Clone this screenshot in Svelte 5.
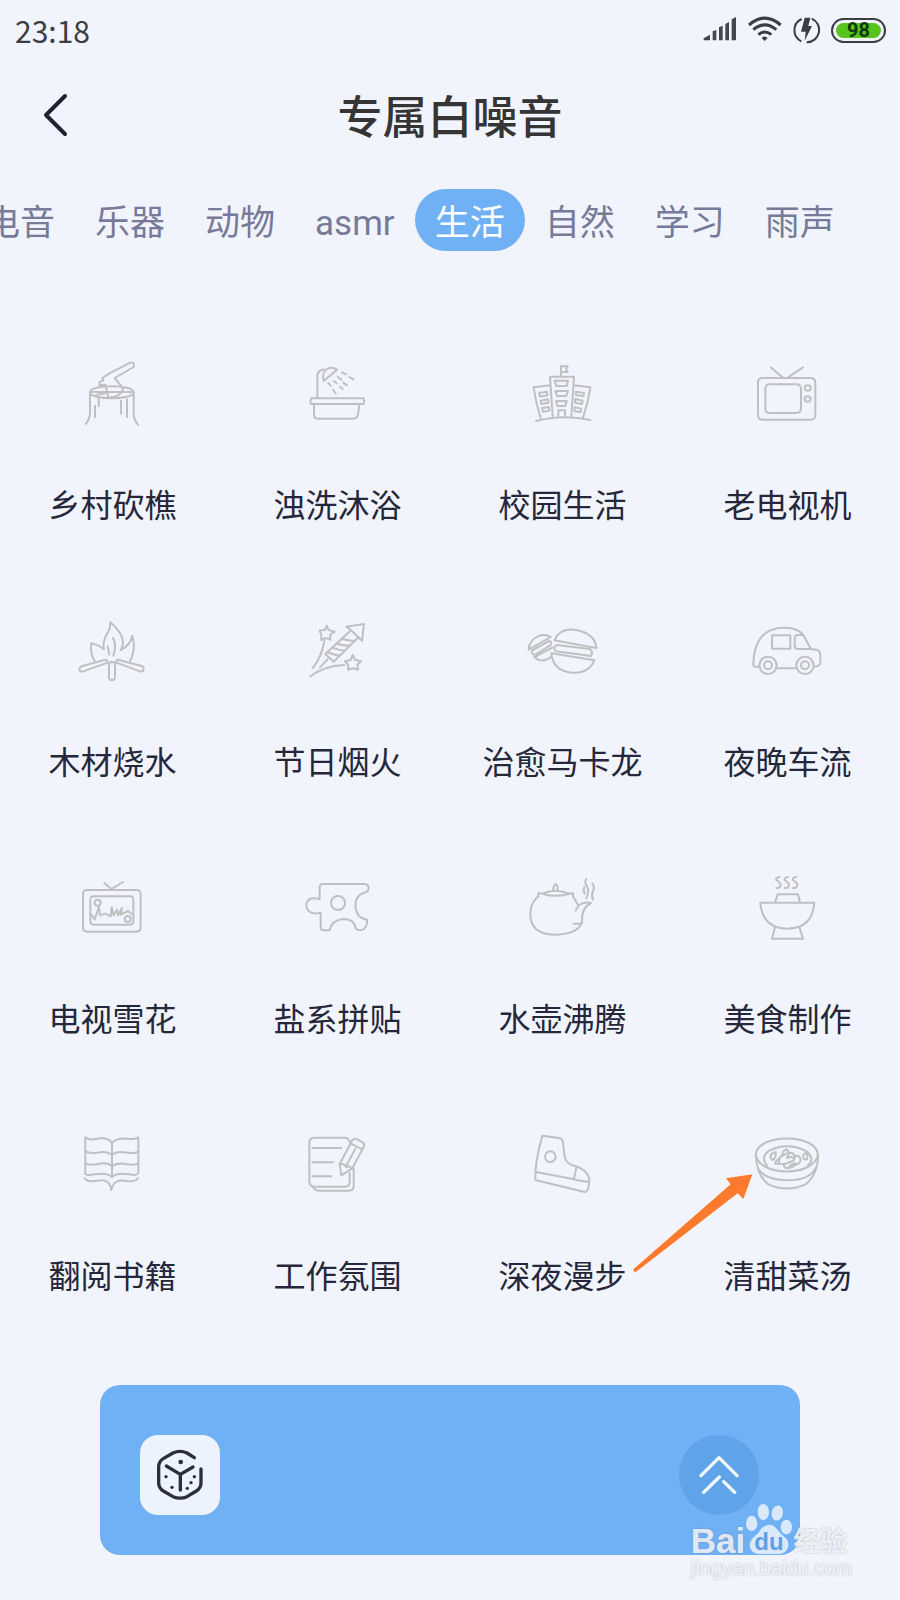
<script>
  const tabs = ['电音', '乐器', '动物', 'asmr', '生活', '自然', '学习', '雨声'];
  let activeTab = $state('生活');

  const sounds = [
    {
      name: '乡村砍樵',
      box: '31 24 252 252',
      paths: [
        'M91 142C91 118 222 118 222 142C222 166 91 166 91 142Z',
        'M91 142V205Q90 222 78 237M222 142V208Q223 225 235 239',
        'M106 182V217M117 158V184M184 168V206M202 163V216',
        'M97 141H217M108 151Q120 146 139 145',
        'M148 86L212 53Q224 50 223 63L222 66L165 99L191 131Q180 160 146 157L137 119L119 121L120 111L131 106L128 99Z',
      ],
    },
    {
      name: '浊洗沐浴',
      box: '706 24 252 252',
      paths: [
        'M773 158V92Q774 77 792 73',
        'M792 108Q785 82 802 72Q816 64 832 74Z',
        'M754 160H912Q915 168 912 177H754Q750 168 754 160Z',
        'M763 178V212Q764 221 776 221H882Q893 220 895 209L899 178',
        'M847 82L859 88M869 96L881 103M834 95L845 104M822 108L831 115M806 114L813 122M851 113L862 121M841 125L849 132M820 134L828 145',
      ],
    },
    {
      name: '校园生活',
      box: '31 24 252 252',
      paths: [
        'M79 228Q160 207 242 225',
        'M129 214L121 95H193L185 214M93 219Q78 172 72 127L121 121M220 218Q236 172 242 127L193 121',
        'M154 94V64H174L169 73L174 81H155',
        'M135 107H175L171 123H140ZM137 138H175L170 153H142ZM139 168H171L167 183H143ZM146 213V196H166V213',
        'M88 144L112 140L113 151L91 155ZM93 167L115 163L117 173L95 177ZM97 189L118 186L119 197L100 200Z',
        'M198 140L223 144L221 154L199 150ZM197 162L219 167L217 177L196 173ZM195 187L215 191L212 202L194 198Z',
      ],
    },
    {
      name: '老电视机',
      box: '706 24 252 252',
      paths: [
        'M759 99H903Q917 99 917 113V210Q917 224 903 224H759Q745 224 745 210V113Q745 99 759 99Z',
        'M780 118H860Q874 118 874 132V190Q874 204 860 204H780Q767 204 767 190V132Q767 118 780 118Z',
        'M783 67L820 98M880 67L834 98',
        'M885 129a9 8 0 1 0 18 0a9 8 0 1 0 -18 0M885 162a9 8 0 1 0 18 0a9 8 0 1 0 -18 0',
      ],
    },
    {
      name: '木材烧水',
      box: '31 15 252 252',
      paths: [
        'M132 132Q129 105 145 82Q153 68 152 52Q191 86 190 113Q190 124 184 135',
        'M132 132Q118 121 95 115Q90 145 105 168M184 135Q212 120 218 92Q230 134 211 168',
        'M144 124L149 149M160 99Q172 122 161 152',
        'M65 184L137 164Q145 166 144 173L69 200Q55 200 61 188ZM249 184L175 164Q168 167 170 173L243 200Q258 199 249 184Z',
        'M157 170Q167 171 166 180V216Q165 226 157 226Q148 226 148 216V180Q148 171 157 170Z',
      ],
    },
    {
      name: '节日烟火',
      box: '706 15 252 252',
      paths: [
        'M860 65L913 57L907 107L896 97L822 170L797 147L874 76Z',
        'M874 76L896 97M803 141Q820 150 840 152M817 128Q836 135 855 137M831 116Q852 122 869 122M846 102Q866 107 884 108',
        'M801 62L807 75L825 80L812 89L812 104L798 99L785 105L785 90L780 76L795 76Z',
        'M879 150L887 165L904 169L893 179L895 194L880 190L865 194L866 180L856 169L873 165Z',
        'M804 163L781 187M794 108Q786 157 759 189M854 180Q792 183 752 214',
      ],
    },
    {
      name: '治愈马卡龙',
      box: '31 15 252 252',
      paths: [
        'M134 106Q150 67 199 75Q257 86 260 129Z',
        'M141 120L241 132Q251 141 244 153L139 139Q128 129 141 120Z',
        'M125 145L254 166Q238 205 188 203Q130 198 125 145Z',
        'M57 134Q59 103 90 92Q107 86 123 96Z',
        'M69 135L118 108Q129 110 122 121L77 149Q62 149 69 135Z',
        'M74 156L129 127M74 156Q97 177 126 155',
      ],
    },
    {
      name: '夜晚车流',
      box: '706 15 252 252',
      paths: [
        'M748 185H736Q730 184 731 174Q735 68 824 68Q867 68 882 92L904 132L920 134Q932 137 932 150V174Q931 184 912 185M801 190H860',
        'M787 91H842V131H787ZM877 90H865Q855 90 855 102V122Q855 132 865 132H903',
        'M749 181a26 26 0 1 0 52 0a26 26 0 1 0 -52 0M860 181a26 26 0 1 0 52 0a26 26 0 1 0 -52 0',
        'M763 181a12 12 0 1 0 24 0a12 12 0 1 0 -24 0M874 181a12 12 0 1 0 24 0a12 12 0 1 0 -24 0',
      ],
    },
    {
      name: '电视雪花',
      box: '31 21 252 252',
      paths: [
        'M82 90H230Q243 90 243 103V202Q243 215 230 215H82Q70 215 70 202V103Q70 90 82 90Z',
        'M103 109H211Q221 109 221 119V184Q221 194 211 194H103Q92 194 92 184V119Q92 109 103 109Z',
        'M134 69L155 87L190 66',
        'M105 128a9 9 0 1 0 18 0a9 9 0 1 0 -18 0M195 177a9 9 0 1 0 18 0a9 9 0 1 0 -18 0',
        'M95 164L105 178L118 140L121 166L137 161L153 169L156 142L162 166L172 149L175 166L187 144L183 164L205 153L217 163',
      ],
    },
    {
      name: '盐系拼贴',
      box: '706 21 252 252',
      paths: [
        'M780 118V82Q780 72 790 72H915Q927 73 927 84Q927 95 914 98Q887 105 887 138Q890 175 922 179Q924 199 910 209Q897 214 888 205Q884 177 850 177Q817 180 809 211H792Q783 210 783 201V158Q773 162 758 159Q740 153 740 136Q742 107 780 118Z',
        'M814 129a21 21 0 1 0 42 0a21 21 0 1 0 -42 0',
      ],
    },
    {
      name: '水壶沸腾',
      box: '31 21 252 252',
      paths: [
        'M86 109Q61 130 62 164Q63 222 134 224Q202 224 217 188L218 164Q222 140 244 129Q210 122 198 152',
        'M86 109V99L99 101Q138 84 178 101L190 100V109L205 135M99 102Q137 113 178 102M131 92Q131 74 138 73Q145 75 144 92M192 191H215',
        'M230 57Q223 68 232 79Q240 91 230 115M248 71Q256 80 250 93Q244 106 250 119M224 82Q219 91 225 101',
      ],
    },
    {
      name: '美食制作',
      box: '706 21 252 252',
      paths: [
        'M752 128H914Q909 205 833 206Q758 205 752 128Z',
        'M796 127L804 103H865L871 127M796 201L787 236H880L869 201',
        'M810 51Q797 52 800 60Q814 69 813 77Q809 86 800 84M835 51Q822 52 825 60Q839 69 838 77Q834 86 825 84M860 51Q847 52 850 60Q864 69 863 77Q859 86 850 84',
      ],
    },
    {
      name: '翻阅书籍',
      box: '31 27 252 252',
      paths: [
        'M157 84Q144 65 110 72Q90 76 77 67V177Q85 183 104 178Q145 172 157 186Q169 172 210 178Q231 183 236 175V67Q220 75 203 71Q170 68 157 84V186',
        'M77 109Q89 116 112 113Q140 106 157 120Q171 106 204 113Q224 117 236 109M77 145Q91 151 112 148Q142 140 157 154Q172 141 204 148Q224 151 236 145',
        'M75 190Q84 202 112 197Q150 189 155 225Q162 189 202 198Q226 202 235 189',
      ],
    },
    {
      name: '工作氛围',
      box: '706 27 252 252',
      paths: [
        'M870 80Q867 68 854 68H764Q749 68 749 83V201Q750 215 764 215H856Q870 215 870 201V174',
        'M759 214Q765 227 778 227H868Q882 227 882 213V160M758 99H845M758 142H820M758 184H815',
        'M840 147L878 76Q884 68 893 73L909 82Q917 87 912 96L878 160L845 181Z',
        'M843 148L853 148L859 156L868 154L878 160M872 85L908 103M887 101L859 154',
      ],
    },
    {
      name: '深夜漫步',
      box: '31 27 252 252',
      paths: [
        'M98 62L148 69Q159 71 160 84L165 125Q168 147 198 154Q233 164 239 192L237 216Q233 230 225 231L77 195Q75 142 98 62Z',
        'M79 171L190 192Q221 201 239 200M200 157L193 192',
        'M106 125a16 16 0 1 0 32 0a16 16 0 1 0 -32 0',
      ],
    },
    {
      name: '清甜菜汤',
      box: '706 27 252 252',
      paths: [
        'M738 119C744 54 920 54 925 119C915 186 748 186 738 119Z',
        'M738 119Q742 183 776 208Q833 233 888 208Q925 177 925 119M746 161Q765 195 834 196Q900 195 917 160',
        'M772 151Q751 126 779 107Q832 81 887 107Q919 131 895 151',
        'M798 111Q780 115 783 129L789 135Q800 129 798 111M881 120Q878 136 892 133Q896 117 887 114Z',
        'M808 142Q806 127 817 122Q818 107 830 103Q837 107 838 115Q850 110 854 123Q873 120 873 137Q867 150 856 149Q848 160 828 159Q820 155 824 147L797 146Q800 130 811 133M816 124L830 115M825 147L850 138L856 126M836 157Q845 147 857 145M838 115L832 129Q843 124 852 127',
      ],
    },
  ];
</script>

<svelte:head>
  <title>专属白噪音</title>
</svelte:head>

<div class="screen">
  <div class="status-bar">
    <span>23:18</span>
    <div class="status-icons">
      <svg width="34" height="28" viewBox="756 50 102 84" aria-hidden="true">
        <path d="M758 123V117L777 106V123ZM785 96L796 92V123H785ZM804 84L815 79V123H804ZM823 74L834 68V123H823ZM842 60L855 53V123H842Z" fill="#45474d" />
      </svg>
      <svg width="34" height="28" viewBox="891 50 102 84" fill="none" stroke="#3b3d44" aria-hidden="true">
        <path d="M894 77Q941 36 989 77M907 91Q941 62 976 91M922 106Q941 90 961 106" stroke-width="9" />
        <path d="M932 116Q941 107 950 116L941 125Z" fill="#3b3d44" stroke="none" />
      </svg>
      <svg width="27" height="28" viewBox="1027 50 81 84" aria-hidden="true">
        <path d="M1053 59A37 37 0 0 0 1052 126M1083 58A37 37 0 0 1 1068 129" fill="none" stroke="#3b3d44" stroke-width="6" />
        <path d="M1062 55H1079L1073 80H1084L1062 124L1065 97H1051Z" fill="#3b3d44" />
      </svg>
      <div class="battery"><span>98</span></div>
    </div>
  </div>

  <header class="header">
    <button class="back" aria-label="返回">
      <svg width="26" height="44" viewBox="0 0 26 44" aria-hidden="true">
        <path d="M23 3L4 22L23 41" />
      </svg>
    </button>
    <h1>专属白噪音</h1>
  </header>

  <nav class="tabs">
    {#each tabs as tab (tab)}
      <button class="tab" class:active={tab === activeTab} onclick={() => (activeTab = tab)}>
        <span>{tab}</span>
      </button>
    {/each}
  </nav>

  <main class="sound-grid">
    {#each sounds as sound, i (sound.name)}
      <div class="cell">
        <button class="sound">
          <svg width="84" height="84" viewBox={sound.box} aria-hidden="true">
            {#each sound.paths as d}
              <path {d} />
            {/each}
          </svg>
          <span>{sound.name}</span>
        </button>
        {#if i === sounds.length - 1}
          <svg class="pointer" width="122" height="102" viewBox="366 174 366 306" aria-hidden="true">
            <path d="M727 178L648 190L662 208L371 462Q368 468 376 472L683 235L700 252Z" />
          </svg>
        {/if}
      </div>
    {/each}
  </main>

  <footer class="player">
    <button class="dice" aria-label="随机">
      <svg width="52" height="56" viewBox="193 231 156 168" aria-hidden="true">
        <path d="M314 263L292 249Q271 239 250 249L222 265Q207 274 207 290V338Q207 354 221 363L250 380Q271 389 292 380L320 363Q334 354 334 338V297M230 288L272 313L310 291M272 313V360" />
        <g>
          <circle cx="273" cy="276" r="7" />
          <circle cx="229" cy="320" r="5" />
          <circle cx="247" cy="352" r="5" />
          <circle cx="314" cy="320" r="5" />
          <circle cx="304" cy="338" r="5" />
          <circle cx="293" cy="355" r="5" />
        </g>
      </svg>
    </button>
    <button class="expand" aria-label="展开">
      <svg width="40" height="40" viewBox="179 255 120 120" aria-hidden="true">
        <path d="M185 317L239 263L293 317M193 367L240 321M253 335L286 367" />
      </svg>
    </button>

    <div class="watermark">
      <div class="brand">
        <span class="brand-bai">Bai</span>
        <svg width="48" height="52" viewBox="314 399 144 156" aria-hidden="true">
          <ellipse cx="334" cy="460" rx="17" ry="23" />
          <ellipse cx="369" cy="426" rx="17" ry="24" />
          <ellipse cx="411" cy="429" rx="17" ry="23" transform="rotate(10 411 429)" />
          <ellipse cx="438" cy="471" rx="17" ry="22" />
          <path d="M386 464Q402 464 412 480Q418 490 432 500Q448 513 443 532Q437 552 416 552H356Q331 551 328 529Q327 512 344 498Q355 490 360 480Q370 465 386 464Z" />
          <text x="386" y="541" text-anchor="middle">du</text>
        </svg>
        <span class="brand-cn">经验</span>
      </div>
      <div class="brand-url">jingyan.baidu.com</div>
    </div>
  </footer>
</div>

<style>
  :global(body) {
    background: #f1f4fc;
  }

  .screen {
    min-height: 100vh;
    overflow: hidden;
    background: #f1f4fc;
    color: #25273a;
    font-family: 'Noto Sans CJK SC', sans-serif;
  }

  button {
    padding: 0;
    border: none;
    background: none;
    color: inherit;
    font: inherit;
    cursor: pointer;
  }

  svg {
    display: block;
  }

  .status-bar {
    display: flex;
    align-items: center;
    justify-content: space-between;
    height: 60px;
    padding: 0 14px 0 15px;
    color: #3b3d44;
    font-size: 30px;
    line-height: 40px;
  }

  .status-icons {
    display: flex;
    align-items: center;
    gap: 11px;
  }

  .battery {
    display: flex;
    width: 55px;
    height: 25px;
    padding: 3px;
    border: 2px solid #3b3d44;
    border-radius: 13px;
    box-sizing: border-box;
  }

  .battery span {
    flex: 1;
    border-radius: 8px;
    background: #55c41d;
    color: #12370a;
    font-family: Roboto, sans-serif;
    font-size: 20px;
    font-weight: 700;
    line-height: 15px;
    text-align: center;
  }

  .header {
    display: grid;
    grid-template-columns: 110px 1fr 110px;
    align-items: center;
    height: 110px;
    border-bottom: 2px solid #f3f4f8;
  }

  .back {
    display: flex;
    justify-content: center;
  }

  .back path {
    fill: none;
    stroke: #202333;
    stroke-width: 4;
    stroke-linecap: round;
    stroke-linejoin: round;
  }

  h1 {
    margin: 0;
    color: #353535;
    font-size: 45px;
    font-weight: 500;
    line-height: 64px;
    text-align: center;
  }

  .tabs {
    display: flex;
    margin: 17px 0 0 -35px;
  }

  .tab {
    flex: none;
    height: 62px;
    padding: 0 20px;
    border-radius: 31px;
    color: #777a98;
    font-size: 35px;
    line-height: 62px;
  }

  .tab span {
    font-family: Roboto, 'Noto Sans CJK SC', sans-serif;
    line-height: 1;
  }

  .tab.active {
    background: #70b0f4;
    color: #fff;
  }

  .sound-grid {
    display: grid;
    grid-template-columns: repeat(4, 1fr);
    row-gap: 87px;
    margin-top: 102px;
  }

  .cell {
    position: relative;
    display: flex;
    justify-content: center;
  }

  .sound {
    display: flex;
    flex-direction: column;
    align-items: center;
    gap: 46px;
    font-size: 32px;
    line-height: 40px;
    white-space: nowrap;
  }

  .sound path {
    fill: none;
    stroke: #bfc0c2;
    stroke-width: 6;
    stroke-linecap: round;
    stroke-linejoin: round;
  }

  .pointer {
    position: absolute;
    top: 49px;
    left: -43px;
    fill: #ff7a2c;
    pointer-events: none;
  }

  .player {
    position: relative;
    display: flex;
    align-items: flex-end;
    justify-content: space-between;
    height: 170px;
    margin: 91px 100px 45px;
    padding: 0 41px 40px 40px;
    border-radius: 20px;
    background: #70b0f4;
    box-sizing: border-box;
  }

  .dice,
  .expand {
    display: flex;
    align-items: center;
    justify-content: center;
    width: 80px;
    height: 80px;
  }

  .dice {
    border-radius: 18px;
    background: #ecf3fc;
  }

  .dice path {
    fill: none;
    stroke: #2b2f3d;
    stroke-width: 10;
    stroke-linecap: round;
    stroke-linejoin: round;
  }

  .dice circle {
    fill: #2b2f3d;
  }

  .expand {
    border-radius: 50%;
    background: #5fa3e9;
  }

  .expand path {
    fill: none;
    stroke: #f2fbff;
    stroke-width: 10;
    stroke-linecap: round;
    stroke-linejoin: round;
  }

  .watermark {
    position: absolute;
    right: -52px;
    bottom: -26px;
    color: rgba(255, 255, 255, 0.8);
    font-family: 'Liberation Sans', 'Noto Sans CJK SC', sans-serif;
    text-shadow: 0 0 2px rgba(120, 130, 150, 0.6);
    white-space: nowrap;
    pointer-events: none;
  }

  .brand {
    display: flex;
    align-items: flex-end;
    font-weight: 700;
  }

  .brand-bai {
    font-size: 35px;
    line-height: 28px;
  }

  .brand svg {
    fill: #d9e8fb;
  }

  .brand text {
    fill: #5f9fe6;
    font-size: 72px;
    text-shadow: none;
  }

  .brand-cn {
    font-size: 27px;
    line-height: 26px;
  }

  .brand-url {
    font-size: 20px;
    line-height: 26px;
  }
</style>
